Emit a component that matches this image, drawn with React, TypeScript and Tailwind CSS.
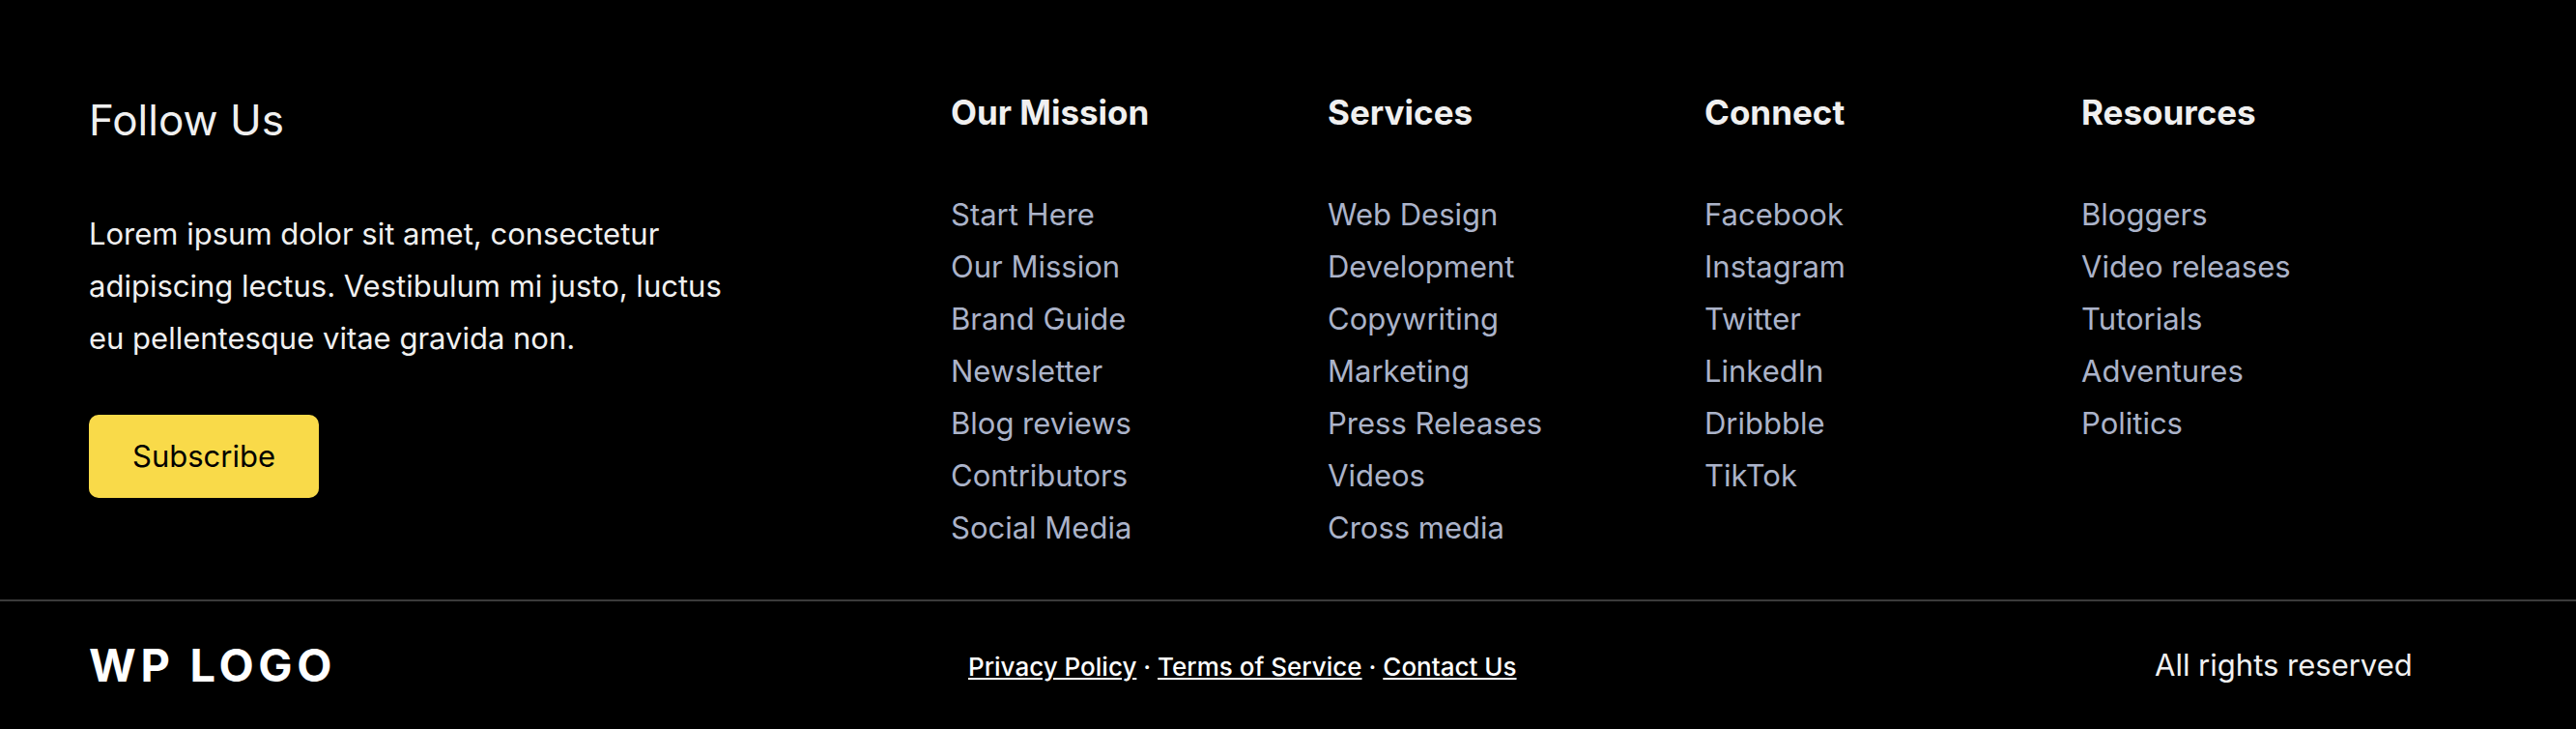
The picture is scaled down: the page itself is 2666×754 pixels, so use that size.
const columns = [
  {
    title: "Our Mission",
    links: ["Start Here", "Our Mission", "Brand Guide", "Newsletter", "Blog reviews", "Contributors", "Social Media"],
  },
  {
    title: "Services",
    links: ["Web Design", "Development", "Copywriting", "Marketing", "Press Releases", "Videos", "Cross media"],
  },
  {
    title: "Connect",
    links: ["Facebook", "Instagram", "Twitter", "LinkedIn", "Dribbble", "TikTok"],
  },
  {
    title: "Resources",
    links: ["Bloggers", "Video releases", "Tutorials", "Adventures", "Politics"],
  },
];

function LinkColumn({ title, links }: { title: string; links: string[] }) {
  return (
    <nav aria-label={title}>
      <h3 className="text-[35px] leading-[48px] font-bold">{title}</h3>
      <ul className="mt-[55px] text-[31px] leading-[54px] text-[#abb3c9]">
        {links.map((link) => (
          <li key={link}>
            <a href="#">{link}</a>
          </li>
        ))}
      </ul>
    </nav>
  );
}

export default function App() {
  return (
    <footer className="min-h-screen bg-black font-['Inter',sans-serif] text-[#f0f0f0]">
      <div className="grid grid-cols-[892fr_390fr_390fr_390fr_420fr] px-[92px] pt-[92px] pb-[47px]">
        <section>
          <h2 className="text-[44px] leading-[64px]">Follow Us</h2>
          <p className="mt-[59px] max-w-[670px] text-[31px] leading-[54px]">
            Lorem ipsum dolor sit amet, consectetur adipiscing lectus. Vestibulum mi justo, luctus eu pellentesque vitae
            gravida non.
          </p>
          <button type="button" className="mt-[52px] rounded-[10px] bg-[#f9da49] px-[45px] py-4 text-[31px] leading-[54px] text-black">
            Subscribe
          </button>
        </section>
        {columns.map((column) => (
          <LinkColumn key={column.title} {...column} />
        ))}
      </div>
      <div className="grid grid-cols-[910fr_1228fr_344fr] items-center border-t-2 border-[#3b3b3b] px-[92px] py-[34px]">
        <div className="text-[47px] leading-[64px] font-bold tracking-widest text-white">WP LOGO</div>
        <nav aria-label="Legal" className="pt-0.5 text-[26px] font-medium text-white">
          <a href="#" className="underline">Privacy Policy</a> · <a href="#" className="underline">Terms of Service</a> ·{" "}
          <a href="#" className="underline">Contact Us</a>
        </nav>
        <p className="text-[31px] leading-[54px]">All rights reserved</p>
      </div>
    </footer>
  );
}
